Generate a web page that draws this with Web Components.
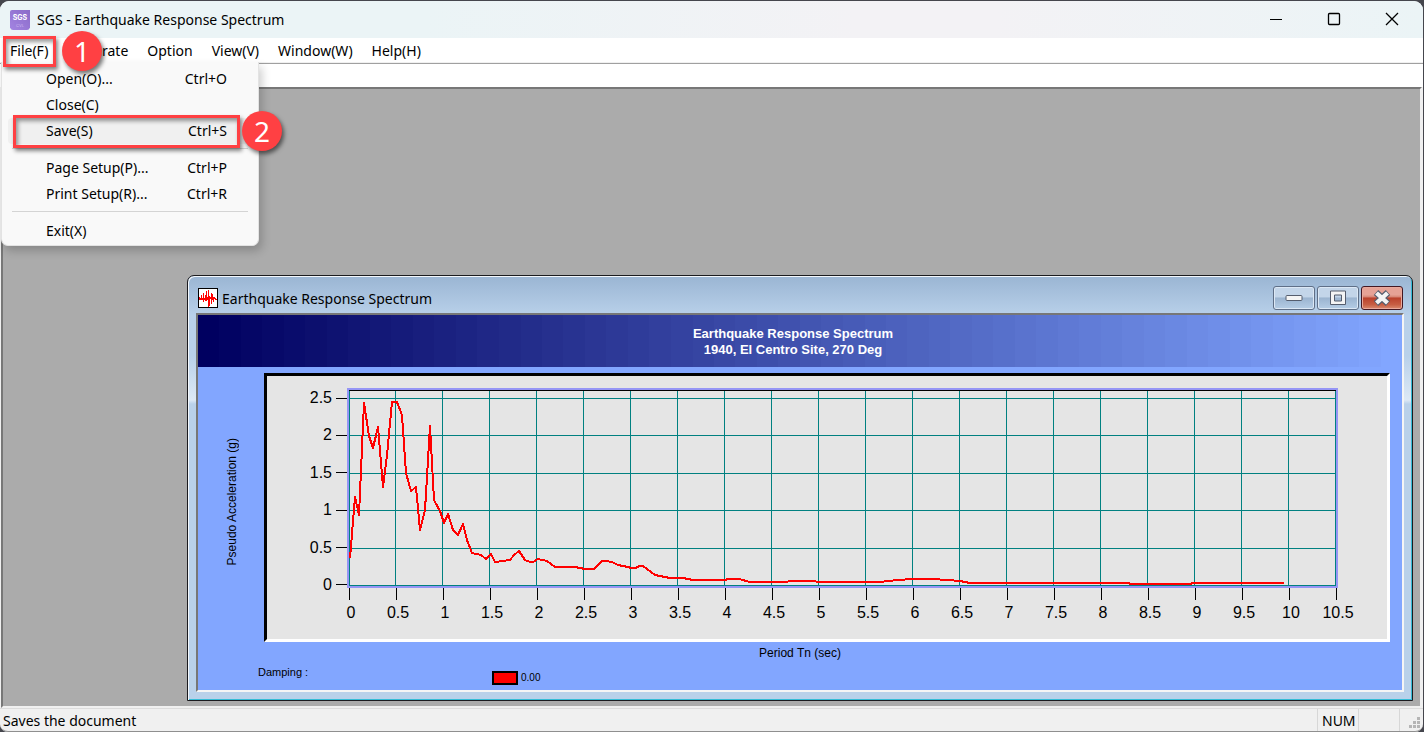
<!DOCTYPE html>
<html lang="en">
<head>
<meta charset="utf-8">
<title>SGS - Earthquake Response Spectrum</title>
<style>
html,body{margin:0;height:100%}
body{background:#45464d;font:14px/20px "Noto Sans","Segoe UI",sans-serif;color:#000;overflow:hidden}
</style>
</head>
<body>
<sgs-app></sgs-app>
<script>
const define = (name, html, init) => {
  const t = document.createElement('template');
  t.innerHTML = html;
  customElements.define(name, class extends HTMLElement {
    constructor() {
      super();
      this.attachShadow({mode: 'open'}).append(t.content.cloneNode(true));
    }
    connectedCallback() { if (init) init(this, this.shadowRoot); }
  });
};

/* numbered marker with a highlight frame */
define('step-marker', `
<style>
:host{position:absolute;pointer-events:none;z-index:5;box-sizing:border-box;border:3px solid #ff4043;box-shadow:2px 3px 4px #0007,inset 2px 3px 4px #0006}
b{position:absolute;top:50%;left:100%;margin:-21px 0 0 var(--gap,5px);width:40px;height:40px;border-radius:50%;background:#ff4043;color:#fff;font:400 28px/40px "Noto Sans",sans-serif;text-align:center;box-shadow:2px 3px 4px #0008}
</style><b><slot></slot></b>`);

define('title-bar', `
<style>
:host{display:flex;align-items:center;height:37px;padding:0 2px 0 10px;background:linear-gradient(90deg,#ebf4f6,#ebf4f6 30%,#f3f2f5 60%,#f3f2f5 70%,#ebf4f6)}
h1{flex:1;margin:0 0 0 7px;font:inherit}
button{width:58px;height:37px;padding:0;border:0;background:none;display:grid;place-items:center}
button svg{margin-top:-2px}
svg{display:block}
</style>
<svg width="20" height="20" viewBox="0 0 20 20"><defs><linearGradient id="g" x1="0" y1="1" x2="1" y2="0"><stop stop-color="#a384e2"/><stop offset="1" stop-color="#8b6bc8"/></linearGradient></defs><path d="M2 0h18v17.500q-1 2.500-3 2.500H3q-2 0-3-2.500V2q0-2 2-2z" fill="url(#g)"/><text x="10" y="10" text-anchor="middle" font-family="Inter" font-weight="700" font-size="7" fill="#fff">SGS</text><text x="10" y="17" text-anchor="middle" font-family="Inter" font-size="4" fill="#c9b5ef">CVL</text></svg>
<h1><slot></slot></h1>
<button aria-label="Minimize"><svg width="14" height="14"><path d="M1 7.500h12" stroke="#000"/></svg></button>
<button aria-label="Maximize"><svg width="14" height="14"><rect x="1.500" y="1.500" width="11" height="11" rx="1" fill="none" stroke="#000" stroke-width="1.300"/></svg></button>
<button aria-label="Close"><svg width="14" height="14"><path d="M1 1l12 12M13 1L1 13" stroke="#000" stroke-width="1.300"/></svg></button>`);

define('menu-entry', `
<style>
:host{display:block}
button{display:flex;justify-content:space-between;align-items:center;box-sizing:border-box;width:100%;height:26px;padding:0 24px 0 38px;border:0;border-radius:4px;background:none;font:inherit;color:inherit}
:host([active]) button{background:#f0f0f0}
</style><button role="menuitem"><span><slot></slot></span><span><slot name="key"></slot></span></button>`);

define('file-menu', `
<style>
:host{position:absolute;left:1px;top:24px;width:258px;box-sizing:border-box;z-index:3;padding:4px 7px 1px 6px;background:#f9f9f9;border-radius:0 0 7px 7px;border:1px solid #e3e3e3;border-width:0 1px 1px;box-shadow:3px 5px 10px #0003}
hr{margin:4px 3px 6px 4px;border:0;border-top:1px solid #d4d4d4}
step-marker{left:11px;top:53px;width:227px;height:33px}
</style>
<div role="menu">
<menu-entry>Open(O)...<span slot="key">Ctrl+O</span></menu-entry>
<menu-entry>Close(C)</menu-entry>
<menu-entry active>Save(S)<span slot="key">Ctrl+S</span></menu-entry>
<hr>
<menu-entry>Page Setup(P)...<span slot="key">Ctrl+P</span></menu-entry>
<menu-entry>Print Setup(R)...<span slot="key">Ctrl+R</span></menu-entry>
<hr>
<menu-entry>Exit(X)</menu-entry>
</div>
<step-marker>2</step-marker>`);

define('menu-bar', `
<style>
:host{display:block;position:relative;background:#fff;border-bottom:1px solid #a0a0a0}
nav{display:flex;gap:19px;height:23px;padding:1px 0 0 10px;border-bottom:1px solid #f0f0f0}
button{padding:0;border:0;background:none;font:inherit;color:inherit}
step-marker{left:3px;top:-2px;width:53px;height:31px;--gap:9px}
</style>
<nav><button>File(F)</button><button>Generate</button><button>Option</button><button>View(V)</button><button>Window(W)</button><button>Help(H)</button></nav>
<file-menu></file-menu>
<step-marker>1</step-marker>`);

define('status-bar', `
<style>
:host{display:flex;height:22px;background:#f0f0f0;border-top:1px solid #dcdcdc;border-bottom:1px solid #8f8f8f;line-height:24px;border-radius:0 0 8px 8px}
.m{flex:1;padding-left:3px}
.c{box-sizing:border-box;width:41px;padding-left:4px;border-left:1px solid #d7d7d7}
.e{width:24px;display:grid;place-items:end}
svg{display:block;margin:0 2px 2px 0}
</style>
<span class="m">Saves the document</span><span class="c">NUM</span><span class="c"></span>
<span class="c e"><svg width="12" height="12" fill="#b5b5b5"><path d="M8 0h3v3H8zM4 4h3v3H4zM8 4h3v3H8zM0 8h3v3H0zM4 8h3v3H4zM8 8h3v3H8z"/></svg></span>`);

define('spectrum-plot', `
<style>
:host{display:grid;grid-template-columns:80px 1fr;margin:0 12px 0 0;padding:12px 49px 17px 0;background:#e5e5e5;border:3px solid;border-color:#000 #fff #fff #000;font:16px/18px "Liberation Sans",Arial,sans-serif}
ul{list-style:none;margin:0;padding:0;display:flex;justify-content:space-between}
.y{flex-direction:column;height:205px;margin:1px 0 -6px}
.y li{display:flex;justify-content:flex-end;align-items:center;gap:4px;height:18px}
.y li::after{content:"";width:11px;height:1px;background:#000}
.p{border:2px solid #9595f5;height:196px}
.p svg{display:block;width:100%;height:196px}
.x{grid-column:2;margin:0 -18px}
.x li{width:40px;text-align:center}
.x li::before{content:"";display:block;width:1px;height:12px;margin:0 auto 4px 20px;background:#000}
.x span{display:block;margin:0 -2px 0 2px}
path,polyline{fill:none;vector-effect:non-scaling-stroke}
</style>
<ul class="y"><li>2.5</li><li>2</li><li>1.5</li><li>1</li><li>0.5</li><li>0</li></ul>
<div class="p"><svg viewBox="0 0 987 196" preserveAspectRatio="none" role="img" aria-label="Pseudo acceleration against period">
<path class="grid" stroke="#008080" shape-rendering="crispEdges"/><path d="M0 .5H987" stroke="#000"/>
<polyline stroke="#f00" stroke-width="2" stroke-linejoin="round" shape-rendering="crispEdges" points="1,168 6,107 10,125 15,13 20,46 24,58 29,37 34,97 38,65 43,12 48,12 53,25 57,83 62,101 67,97 71,140 76,120 81,36 85,110 91,121 95,133 99,124 104,140 109,145 114,134 118,150 123,163 132,165 137,169 142,164 146,172 161,170 165,165 170,161 176,170 181,172 184,172 189,169 198,171 206,177 226,177 236,179 245,179 253,171 257,171 263,172 269,175 279,177 282,178 287,178 290,176 294,176 306,185 321,188 334,188 344,190 376,190 379,189 390,189 401,192 438,192 440,191 466,191 468,192 531,192 549,190 563,189 583,189 598,190 611,191 621,193 780,193 781,194 842,194 843,193 935,193"/></svg></div>
<ul class="x"></ul>`, (host, root) => {
  let d = '';
  for (let i = 0; i < 22; i++) {
    d += `M${Math.floor(i * 46.960) + 0.5} 1V196`;
    const li = document.createElement('li');
    const s = document.createElement('span');
    s.textContent = i / 2;
    li.append(s);
    root.querySelector('.x').append(li);
  }
  for (const y of [8, 45, 83, 120, 158, 195]) d += `M0 ${y + 0.5}H987`;
  root.querySelector('.grid').setAttribute('d', d);
});

define('spectrum-window', `
<style>
:host{display:block;box-sizing:border-box;border:1px solid #1b1b1f;border-radius:7px 7px 0 0;background:linear-gradient(#9ab5d3,#b9d1ea 40px,#b9d1ea 80px,#dde9f5 124px,#b9d1ea 128px);box-shadow:inset 1px 1px #f4f8fc,inset -1px -1px #35bcd6;padding:1px 8px 8px}
header{display:flex;align-items:center;gap:2px;height:36px;padding:0 1px 0 2px}
h2{flex:1;font:inherit;margin:0 0 0 2px;padding-top:8px}
header>svg{margin-top:6px}
header button{box-sizing:border-box;width:42px;height:24px;margin-top:6px;padding:0;border:1px solid #5f6f87;border-radius:3px;display:grid;place-items:center;background:linear-gradient(#c3d5e9 0 45%,#9bb4d0 50%,#b5cde5);box-shadow:inset 0 0 0 1px #dce8f5}
header button.close{border-color:#431722;background:linear-gradient(#e6a296 0 35%,#d78676 45%,#ba412c 50%,#c75e44 80%,#d98b70);box-shadow:inset 0 0 0 1px #e9a99d}
.body{border:2px solid;border-color:#777 #f5f5f5 #f5f5f5 #777;background:#82a6ff;font-family:"Liberation Sans",Arial,sans-serif}
.head{box-sizing:border-box;height:52px;padding:11px 14px 0 0;color:#fff;font-weight:700;font-size:13px;line-height:16px;text-align:center}
.main{display:grid;grid-template-columns:66px 1fr;padding-top:6px}
.yl{justify-self:center;align-self:center;margin:0 0 12px 2px;writing-mode:vertical-rl;transform:rotate(180deg);font-size:12px;line-height:14px}
.xl{text-align:center;font-size:12px;line-height:14px;padding-top:4px}
.leg{display:grid;grid-template-columns:234px 26px 1fr;gap:0;padding-left:60px;height:30px;font-size:11px;line-height:12px}
.leg span:first-child{padding-top:6px}
.leg i{box-sizing:border-box;height:14px;margin-top:11px;border:2px solid #000;background:#f00}
.leg span:last-child{padding:12px 0 0 3px;font-size:10px}
</style>
<header><svg width="20" height="20"><rect x=".500" y=".500" width="19" height="19" fill="#fff" stroke="#000"/><path d="M1.500 9v3M2.500 10v2M3.500 7v5M4.500 10v2M5.500 5v9M6.500 10v2M7.500 7v6M8.500 3v10M9.500 9v3M10.500 2v17M11.500 8v10M12.500 9v2M13.500 5v11M14.500 6v6M15.500 9v5M16.500 9v2M17.500 10v2M18.500 11v1" stroke="#f00" shape-rendering="crispEdges"/></svg>
<h2>Earthquake Response Spectrum</h2>
<button aria-label="Minimize window"><svg width="18" height="8"><rect x="1" y="1.500" width="16" height="5" rx="1" fill="#f4f4f4" stroke="#555d6d"/></svg></button>
<button aria-label="Maximize window"><svg width="18" height="16"><path fill-rule="evenodd" d="M1.500 1h15v13.500h-15zM5.500 5v6h7V5z" fill="#f4f4f4" stroke="#555d6d"/></svg></button>
<button class="close" aria-label="Close window"><svg width="20" height="18"><path d="M4 3.500l12 11M16 3.500l-12 11" stroke="#555d6d" stroke-width="6.500"/><path d="M4.500 4l11 10M15.500 4l-11 10" stroke="#f4f4f4" stroke-width="4.300"/></svg></button></header>
<div class="body">
<div class="head">Earthquake Response Spectrum<br>1940, El Centro Site, 270 Deg</div>
<div class="main"><div class="yl">Pseudo Acceleration (g)</div><spectrum-plot></spectrum-plot></div>
<div class="xl">Period Tn (sec)</div>
<div class="leg"><span>Damping :</span><i></i><span>0.00</span></div>
</div>`, (host, root) => {
  const n = 56, stops = [];
  for (let i = 0; i < n; i++) {
    const t = i / (n - 1), mix = (a, b) => Math.round(a + (b - a) * t);
    stops.push(`rgb(${mix(0, 130)},${mix(0, 166)},${mix(96, 255)}) ${i * 100 / n}% ${(i + 1) * 100 / n}%`);
  }
  root.querySelector('.head').style.background = `linear-gradient(90deg,${stops})`;
});

define('sgs-app', `
<style>
:host{display:flex;flex-direction:column;height:100vh;box-sizing:border-box;padding:1px 1px 0 0}
.w{flex:1;display:flex;flex-direction:column;border-radius:9px 9px 8px 8px;background:#f0f0f0}
title-bar{border-radius:9px 9px 0 0}
.tool{height:23px;background:#fff}
.mdi{flex:1;position:relative;margin:0 1px;border:2px solid;border-color:#777 #f0f0f0 #f0f0f0 #777;background:#ababab}
spectrum-window{position:absolute;left:184px;right:7px;top:186px}
</style>
<div class="w">
<title-bar>SGS - Earthquake Response Spectrum</title-bar>
<menu-bar></menu-bar>
<div class="tool"></div>
<main class="mdi"><spectrum-window></spectrum-window></main>
<status-bar></status-bar>
</div>`);
</script>
</body>
</html>
